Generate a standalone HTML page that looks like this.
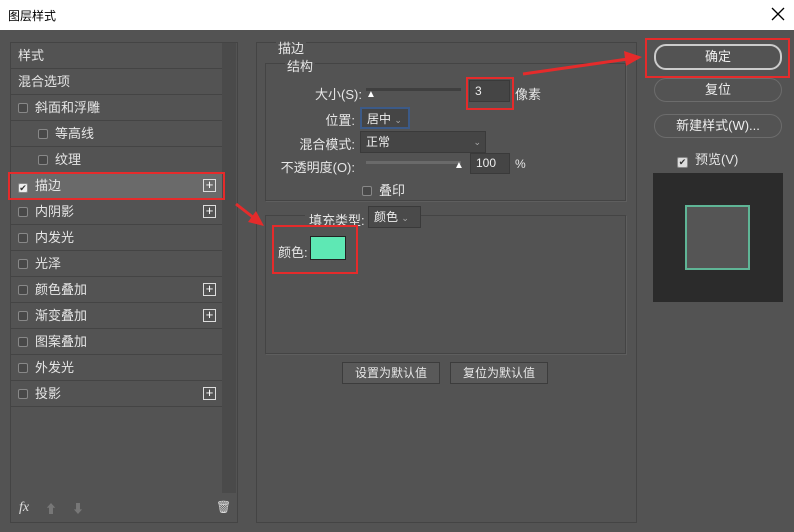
<!DOCTYPE html>
<html><head><meta charset="utf-8"><style>
*{box-sizing:border-box;margin:0;padding:0}
body{width:794px;height:532px;background:#535353;font-family:"Liberation Sans","Noto Sans CJK SC",sans-serif;font-size:12px;color:#e6e6e6;position:relative;overflow:hidden}
.a{position:absolute}
.title{left:0;top:0;width:794px;height:30px;background:#fff;color:#000;font-size:12px;padding:7px 0 0 8px}
.row{position:absolute;left:11px;width:211px;height:26px;border-bottom:1px solid #444;line-height:26px;padding-left:7px;font-size:13px}
.cb{display:inline-block;width:10px;height:10px;border:1px solid #888;background:#484848;border-radius:2px;vertical-align:-1px;margin-right:7px}
.plus{position:absolute;right:6px;top:6px;width:13px;height:13px;border:1px solid #ddd;font-size:13px;line-height:10px;text-align:center;color:#fff}
.grp{position:absolute;border:1px solid #444;box-shadow:1px 1px 0 #5e5e5e}
.inp{position:absolute;background:#454545;border:1px solid #3a3a3a;color:#eee;padding-left:5px}
.btn{position:absolute;border:1px solid #6c6c6c;border-radius:12px;text-align:center;color:#eee;height:24px;line-height:22px;font-size:13px}
.red{position:absolute;border:2px solid #e52b2b}
.sbtn{position:absolute;border:1px solid #3c3c3c;background:#595959;height:22px;line-height:20px;text-align:center}
</style></head><body>
<div class="a title">图层样式</div>
<svg class="a" style="left:771px;top:7px" width="14" height="14"><path d="M1 1L13 13M13 1L1 13" stroke="#000" stroke-width="1.3"/></svg>

<div class="a" style="left:10px;top:42px;width:228px;height:481px;border:1px solid #444;"></div>
<div class="a" style="left:222px;top:43px;width:14px;height:450px;background:#4a4a4a"></div>
<div class="row" style="top:43px">样式</div>
<div class="row" style="top:69px">混合选项</div>
<div class="row" style="top:95px"><span class="cb"></span>斜面和浮雕</div>
<div class="row" style="top:121px;padding-left:27px"><span class="cb"></span>等高线</div>
<div class="row" style="top:147px;padding-left:27px"><span class="cb"></span>纹理</div>
<div class="row" style="top:173px;background:#6a6a6a"><span class="cb" style="background:#eee;color:#333;font-size:9px;line-height:8px;text-align:center">✔</span>描边<span class="plus">+</span></div>
<div class="row" style="top:199px"><span class="cb"></span>内阴影<span class="plus">+</span></div>
<div class="row" style="top:225px"><span class="cb"></span>内发光</div>
<div class="row" style="top:251px"><span class="cb"></span>光泽</div>
<div class="row" style="top:277px"><span class="cb"></span>颜色叠加<span class="plus">+</span></div>
<div class="row" style="top:303px"><span class="cb"></span>渐变叠加<span class="plus">+</span></div>
<div class="row" style="top:329px"><span class="cb"></span>图案叠加</div>
<div class="row" style="top:355px"><span class="cb"></span>外发光</div>
<div class="row" style="top:381px"><span class="cb"></span>投影<span class="plus">+</span></div>
<div class="red" style="left:8px;top:172px;width:217px;height:28px"></div>
<div class="a" style="left:19px;top:500px;font-style:italic;font-family:'Liberation Serif';font-size:14px;color:#ddd">fx</div>
<div class="a" style="left:45px;top:500px;color:#777">⬆</div>
<div class="a" style="left:72px;top:500px;color:#777">⬇</div>
<div class="a" style="left:216px;top:500px;color:#ddd">🗑</div>

<div class="a" style="left:256px;top:42px;width:381px;height:481px;border:1px solid #444"></div>
<div class="a" style="left:276px;top:38px;background:#535353;padding:0 2px;font-size:13px">描边</div>
<div class="grp" style="left:265px;top:63px;width:361px;height:138px"></div>
<div class="a" style="left:285px;top:56px;background:#535353;padding:0 2px;font-size:13px">结构</div>
<div class="a" style="left:290px;top:84px;width:72px;text-align:right;font-size:13px">大小(S):</div>
<div class="a" style="left:366px;top:88px;width:95px;height:3px;background:#3f3f3f"></div>
<div class="a" style="left:366px;top:89px;color:#fff;font-size:10px">▲</div>
<div class="inp" style="left:469px;top:80px;width:41px;height:22px;line-height:20px">3</div>
<div class="red" style="left:466px;top:77px;width:48px;height:33px"></div>
<div class="a" style="left:515px;top:84px;font-size:13px">像素</div>
<div class="a" style="left:300px;top:110px;width:55px;text-align:right;font-size:13px">位置:</div>
<div class="inp" style="left:360px;top:107px;width:50px;height:22px;line-height:20px;border:2px solid #3c5a87">居中 <span style="font-size:9px;color:#aaa">⌄</span></div>
<div class="a" style="left:280px;top:134px;width:75px;text-align:right;font-size:13px">混合模式:</div>
<div class="inp" style="left:360px;top:131px;width:126px;height:22px;line-height:20px">正常<span style="float:right;margin-right:4px;font-size:9px;color:#aaa">⌄</span></div>
<div class="a" style="left:275px;top:157px;width:80px;text-align:right;font-size:13px">不透明度(O):</div>
<div class="a" style="left:366px;top:161px;width:95px;height:3px;background:#6a6a6a"></div>
<div class="a" style="left:454px;top:160px;color:#fff;font-size:10px">▲</div>
<div class="inp" style="left:470px;top:153px;width:40px;height:21px;line-height:19px">100</div>
<div class="a" style="left:515px;top:157px">%</div>
<div class="a" style="left:362px;top:180px;font-size:13px"><span class="cb"></span>叠印</div>

<div class="grp" style="left:265px;top:215px;width:361px;height:139px"></div>
<div class="a" style="left:305px;top:210px;background:#535353;padding:0 4px;font-size:13px">填充类型:</div>
<div class="inp" style="left:368px;top:206px;width:53px;height:22px;line-height:20px;background:#4a4a4a">颜色 <span style="font-size:9px;color:#aaa">⌄</span></div>
<div class="a" style="left:278px;top:242px;font-size:13px">颜色:</div>
<div class="a" style="left:310px;top:236px;width:36px;height:24px;background:#5ee8b4;border:1px solid #222"></div>
<div class="red" style="left:272px;top:225px;width:86px;height:49px"></div>
<div class="sbtn" style="left:342px;top:362px;width:98px">设置为默认值</div>
<div class="sbtn" style="left:450px;top:362px;width:98px">复位为默认值</div>

<div class="btn" style="left:654px;top:44px;width:128px;border:2px solid #ccc;height:26px;line-height:22px">确定</div>
<div class="red" style="left:645px;top:38px;width:145px;height:40px"></div>
<div class="btn" style="left:654px;top:78px;width:128px">复位</div>
<div class="btn" style="left:654px;top:114px;width:128px">新建样式(W)...</div>
<div class="a" style="left:677px;top:149px;font-size:13px"><span class="cb" style="background:#ddd;color:#333;font-size:9px;line-height:8px;text-align:center;width:11px;height:11px">✔</span>预览(V)</div>
<div class="a" style="left:653px;top:173px;width:130px;height:129px;background:#2b2b2b"></div>
<div class="a" style="left:685px;top:205px;width:65px;height:65px;background:#555;border:2px solid #5fb596"></div>

<svg class="a" style="left:0;top:0" width="794" height="532">
<g stroke="#e52b2b" stroke-width="3" fill="#e52b2b">
<line x1="523" y1="74" x2="628" y2="59"/><polygon points="642,57 624,51 626,66" stroke="none"/>
<line x1="236" y1="204" x2="254" y2="218"/><polygon points="264,226 248,222 256,211" stroke="none"/>
</g></svg>
</body></html>
